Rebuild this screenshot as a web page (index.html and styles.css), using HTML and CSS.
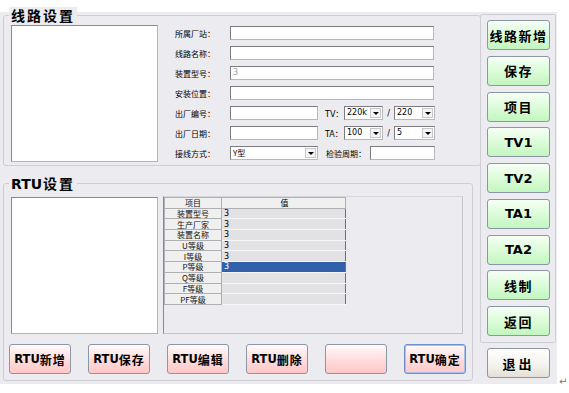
FILE: index.html
```html
<!DOCTYPE html>
<html>
<head>
<meta charset="utf-8">
<link rel="stylesheet" href="styles.css">
</head>
<body>
<div class="page">
  <div class="window">
    <div class="left">
      <div class="group g1">
        <span class="legend">线路设置</span>
        <div class="listbox lb1"></div>
        <div class="form">
          <div class="row"><span class="lbl">所属厂站：</span><span class="inp w-full"></span></div>
          <div class="row"><span class="lbl">线路名称：</span><span class="inp w-full"></span></div>
          <div class="row"><span class="lbl">装置型号：</span><span class="inp w-full dim">3</span></div>
          <div class="row"><span class="lbl">安装位置：</span><span class="inp w-full"></span></div>
          <div class="row">
            <span class="lbl">出厂编号：</span><span class="inp w-short"></span>
            <span class="lbl2">TV：</span>
            <span class="sel s1"><span class="val">220k</span><span class="arr"><i></i></span></span>
            <span class="slash">/</span>
            <span class="sel s2"><span class="val">220</span><span class="arr"><i></i></span></span>
          </div>
          <div class="row">
            <span class="lbl">出厂日期：</span><span class="inp w-short"></span>
            <span class="lbl2">TA：</span>
            <span class="sel s1"><span class="val">100</span><span class="arr"><i></i></span></span>
            <span class="slash">/</span>
            <span class="sel s2"><span class="val">5</span><span class="arr"><i></i></span></span>
          </div>
          <div class="row">
            <span class="lbl">接线方式：</span>
            <span class="sel s3"><span class="val">Y型</span><span class="arr"><i></i></span></span>
            <span class="lbl3">检验周期：</span><span class="inp w-per"></span>
          </div>
        </div>
      </div>
      <div class="group g2">
        <span class="legend"><b class="lat">RTU</b>设置</span>
        <div class="g2-top">
          <div class="listbox lb2"></div>
          <div class="grid">
            <table class="tbl">
              <tr><th class="c1">项目</th><th class="c2">值</th></tr>
              <tr><td class="c1">装置型号</td><td class="c2">3</td></tr>
              <tr><td class="c1">生产厂家</td><td class="c2">3</td></tr>
              <tr><td class="c1">装置名称</td><td class="c2">3</td></tr>
              <tr><td class="c1">U等级</td><td class="c2">3</td></tr>
              <tr><td class="c1">I等级</td><td class="c2">3</td></tr>
              <tr><td class="c1">P等级</td><td class="c2 sel-cell">3</td></tr>
              <tr><td class="c1">Q等级</td><td class="c2"></td></tr>
              <tr><td class="c1">F等级</td><td class="c2"></td></tr>
              <tr><td class="c1">PF等级</td><td class="c2"></td></tr>
            </table>
          </div>
        </div>
        <div class="rtu-btns">
          <button class="btn pink"><span class="lat">RTU</span>新增</button>
          <button class="btn pink"><span class="lat">RTU</span>保存</button>
          <button class="btn pink"><span class="lat">RTU</span>编辑</button>
          <button class="btn pink"><span class="lat">RTU</span>删除</button>
          <button class="btn pink"></button>
          <button class="btn pink focus"><span class="lat">RTU</span>确定</button>
        </div>
      </div>
    </div>
    <div class="right">
      <div class="rframe">
        <button class="btn green">线路新增</button>
        <button class="btn green">保存</button>
        <button class="btn green">项目</button>
        <button class="btn green lat">TV1</button>
        <button class="btn green lat">TV2</button>
        <button class="btn green lat">TA1</button>
        <button class="btn green lat">TA2</button>
        <button class="btn green">线制</button>
        <button class="btn green">返回</button>
      </div>
      <button class="btn exit">退出</button>
    </div>
  </div>
  <span class="ret">↵</span>
</div>
</body>
</html>
```

FILE: styles.css
```css
html, body {
  margin: 0;
  padding: 0;
  background: #ffffff;
}
body {
  font-family: "Noto Sans CJK SC", "DejaVu Sans", sans-serif;
  color: #000;
}
.page {
  display: flex;
  align-items: flex-end;
  width: 569px;
  height: 393px;
}
.window {
  width: 557px;
  height: 372px;
  margin-bottom: 9px;
  background: #ecebf0;
  display: flex;
}
.left {
  width: 480px;
  padding: 3px 0 0 3px;
  box-sizing: border-box;
  display: flex;
  flex-direction: column;
}
.group {
  position: relative;
  border: 1px solid #cfced4;
  border-radius: 3px;
  box-sizing: border-box;
}
.legend {
  position: absolute;
  top: -9px;
  left: 5px;
  padding: 0 2px;
  background: #ecebf0;
  font-size: 14px;
  line-height: 16px;
  font-weight: bold;
  letter-spacing: 2px;
  font-family: "Noto Sans CJK SC", sans-serif;
}
.legend .lat {
  font-family: "DejaVu Sans", sans-serif;
  letter-spacing: 0;
  font-size: 14px;
  margin-right: 1px;
}
.g1 {
  width: 478px;
  height: 151px;
  padding: 9px 0 0 7px;
  display: flex;
  align-items: flex-start;
}
.listbox {
  background: #fff;
  border: 1px solid #b4b4b8;
  border-left-color: #8a8a8e;
  border-top-color: #8a8a8e;
  box-sizing: border-box;
}
.lb1 {
  width: 147px;
  height: 137px;
}
.form {
  margin-left: 17px;
  margin-top: 1px;
  display: flex;
  flex-direction: column;
  gap: 6px;
}
.row {
  display: flex;
  align-items: center;
  height: 14px;
  font-size: 8px;
}
.lbl {
  width: 55px;
  font-size: 8px;
  color: #000;
}
.lbl2 {
  margin-left: 7px;
  width: 19px;
  font-size: 8px;
  font-family: "DejaVu Sans", "Noto Sans CJK SC", sans-serif;
}
.lbl3 {
  margin-left: 8px;
  width: 44px;
  font-size: 8px;
  color: #000;
}
.slash {
  width: 11px;
  text-align: center;
  font-size: 8px;
  font-family: "DejaVu Sans", sans-serif;
}
.inp {
  height: 14px;
  box-sizing: border-box;
  background: #fff;
  border: 1px solid #b8b8bc;
  border-left-color: #7c7c80;
  border-top-color: #7c7c80;
  font-size: 8px;
  line-height: 12px;
  padding-left: 2px;
  font-family: "DejaVu Sans", sans-serif;
}
.dim { color: #a0a0a0; }
.w-full { width: 204px; }
.w-short { width: 88px; }
.w-per { width: 65px; }
.sel {
  display: flex;
  height: 14px;
  box-sizing: border-box;
  background: #fff;
  border: 1px solid #b8b8bc;
  border-left-color: #7c7c80;
  border-top-color: #7c7c80;
  font-family: "DejaVu Sans", "Noto Sans CJK SC", sans-serif;
  font-size: 8px;
}
.sel .val {
  flex: 1;
  line-height: 12px;
  padding-left: 2px;
}
.sel .arr {
  width: 11px;
  height: 10px;
  margin: 1px 1px 0 0;
  box-sizing: border-box;
  border: 1px solid #c8c8cc;
  background: #f4f4f4;
  display: flex;
  align-items: center;
  justify-content: center;
}
.sel .arr i {
  width: 0;
  height: 0;
  border-left: 3px solid transparent;
  border-right: 3px solid transparent;
  border-top: 3px solid #000;
}
.s1 { width: 39px; }
.s2 { width: 41px; }
.s3 { width: 88px; }
.s3 .val { font-family: "Noto Sans CJK SC", sans-serif; }

.g2 {
  margin-top: 17px;
  width: 470px;
  height: 198px;
  padding: 13px 0 0 7px;
}
.g2-top {
  display: flex;
  align-items: flex-start;
}
.lb2 {
  width: 147px;
  height: 137px;
}
.grid {
  margin-left: 5px;
  margin-top: -1px;
  width: 300px;
  height: 138px;
  box-sizing: border-box;
  border: 1px solid #c4c4c8;
  border-left-color: #8a8a8e;
  border-top-color: #d8d8dc;
  background: #ecebf0;
}
.tbl {
  border-collapse: collapse;
  width: 182px;
  font-size: 8px;
  border-right: 1px solid #6e6e72;
  border-bottom: 1px solid #6e6e72;
}
.tbl th, .tbl td {
  height: 9.7px;
  padding: 0;
  line-height: 9px;
  font-weight: normal;
}
.tbl .c1 {
  width: 56px;
  text-align: center;
  background: #f0f0f0;
  border: 1px solid #b0b0b4;
  color: #111;
}
.tbl .c2 {
  background: #e2e2e4;
  border: 1px solid #f6f6f8;
  border-right: 1px solid #6e6e72;
  text-align: left;
  padding-left: 2px;
  font-family: "DejaVu Sans", sans-serif;
}
.tbl th.c2 {
  text-align: center;
  background: #f0f0f0;
  border: 1px solid #b0b0b4;
  font-family: "Noto Sans CJK SC", sans-serif;
}
.tbl .sel-cell {
  background: #3161ab;
  color: #fff;
}
.rtu-btns {
  display: flex;
  gap: 17px;
  margin-top: 10px;
  margin-left: -2px;
}
.btn {
  width: 62px;
  height: 30px;
  border: 1px solid #8b96a6;
  border-radius: 3px;
  box-sizing: border-box;
  padding: 0;
  font-family: "Noto Sans CJK SC", sans-serif;
  font-weight: bold;
  font-size: 12px;
  color: #000;
  display: flex;
  align-items: center;
  justify-content: center;
  letter-spacing: 1px;
}
.btn .lat {
  font-family: "DejaVu Sans", sans-serif;
  letter-spacing: 0;
  font-size: 11.5px;
}
.pink {
  background: linear-gradient(#fffafa, #ffd9d9 60%, #ffc8c8);
}
.focus {
  border-color: #6d8fd2;
  box-shadow: inset 0 0 0 1px #a8c0f0;
}
.right {
  width: 77px;
  padding-top: 2px;
  display: flex;
  flex-direction: column;
}
.rframe {
  width: 76px;
  height: 329px;
  box-sizing: border-box;
  border: 1px solid #cfced4;
  border-radius: 2px;
  padding: 5px 0 0 6px;
  display: flex;
  flex-direction: column;
  gap: 5.75px;
}
.green {
  width: 63px;
  background: linear-gradient(#f6fff5, #dcfcd9 50%, #c2f6bf);
  font-size: 13px;
  letter-spacing: 1.5px;
}
.green.lat {
  font-family: "DejaVu Sans", sans-serif;
  font-size: 13px;
  letter-spacing: 0;
}
.exit {
  width: 63px;
  margin: 5px 0 0 7px;
  background: linear-gradient(#ffffff, #f4f2ec 60%, #e2dfd6);
  font-size: 13px;
  letter-spacing: 3px;
}
.ret {
  font-size: 10px;
  color: #777;
  line-height: 10px;
  margin: 0 0 6px 2px;
  font-family: "DejaVu Sans", sans-serif;
}
```
